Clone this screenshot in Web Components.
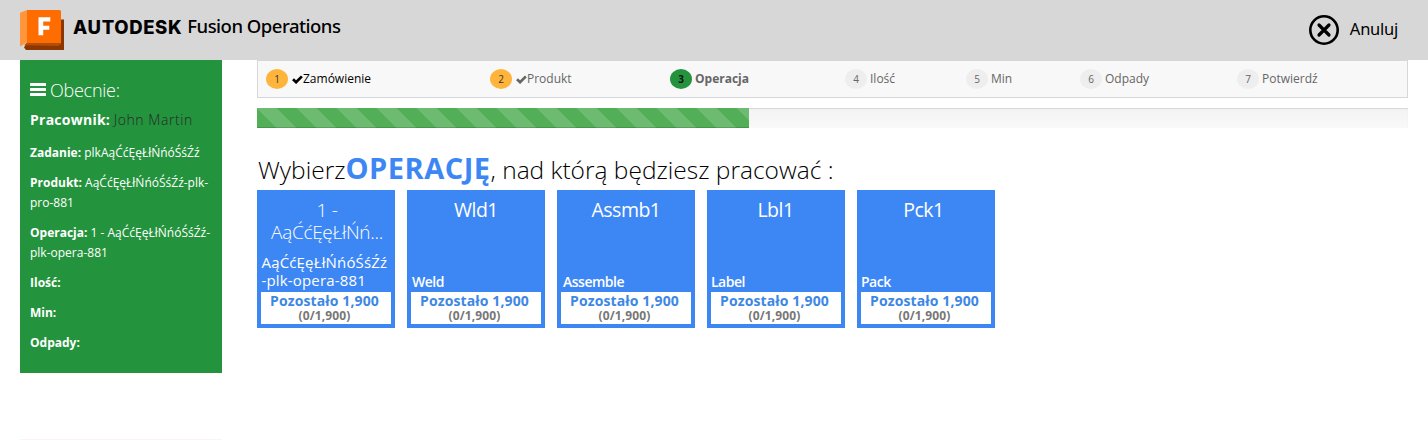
<!DOCTYPE html>
<html lang="pl">
<head>
<meta charset="utf-8">
<title>Fusion Operations</title>
<style>
html,body{margin:0;height:440px;overflow:hidden;background:#fff}
body{font-family:"Open Sans","Noto Sans",sans-serif;font-size:12px;color:#333}
</style>
</head>
<body>
<fo-app></fo-app>
<script>
const define = (name, html) => customElements.define(name, class extends HTMLElement {
  constructor() {
    super();
    const t = document.createElement('template');
    t.innerHTML = typeof html === 'function' ? html(this) : html;
    this.attachShadow({mode: 'open'}).append(t.content.cloneNode(true));
  }
});

define('fo-header', `
<style>
:host{display:flex;height:60px;background:#d7d7d7;align-items:center;box-sizing:border-box;padding:0 30px 0 20px}
.logo{width:44px;height:40px;display:block;margin-right:9px}
.brand{font:800 18.5px/24px Inter,sans-serif;color:#000;letter-spacing:.65px;margin-top:-6px}
.prod{font:500 18.5px/24px "Noto Sans",sans-serif;color:#000;margin:-8px 0 0 5px;letter-spacing:-.5px}
.cancel{margin-left:auto;display:flex;align-items:center;gap:11px;font:400 16.5px/24px "Noto Sans",sans-serif;letter-spacing:-.25px;color:#000}
.cancel svg{display:block}
.cancel slot{display:block;margin-top:-2px}
</style>
<svg class="logo" viewBox="0 0 44 40">
<path d="M41 9.500h3V40H6l-2-2.500 3-5h34z" fill="#8a3700"/>
<path d="M0 2.800L7 0v32.500L0 36.500z" fill="#ff963c"/>
<path d="M7 0h32.500q1.500 0 1.500 1.500V33H7z" fill="#ff6d00"/>
<path d="M4 35.300L7 33h34v1.200L38 36z" fill="#b34e0a"/>
<path d="M18.500 7.300H30.300v4.100h-7.100v4.300h6.100v4h-6.100V25.300h-4.700z" fill="#fff"/>
</svg>
<span class="brand">AUTODESK</span><span class="prod">Fusion Operations</span>
<div class="cancel"><svg width="30" height="30" viewBox="0 0 30 30" fill="none" stroke="#000"><circle cx="15" cy="15" r="13.700" stroke-width="2.600"/><path d="M10 10l10 10M20 10L10 20" stroke-width="3.200" stroke-linecap="round"/></svg><slot></slot></div>`);

define('fo-status-line', `
<style>
:host{display:block;font-size:12px;line-height:20px;margin-bottom:10px;color:#fff;white-space:nowrap}
b{font-weight:700}
</style><b><slot name="label"></slot></b> <slot></slot>`);

define('fo-sidebar', `
<style>
:host{display:block;width:202px;height:313px;box-sizing:border-box;background:#24933d;color:#fff;padding:20px 8px 0 10px}
h2{font-weight:300;font-size:18px;line-height:20px;margin:0 0 9px;display:flex;align-items:center;gap:4px;letter-spacing:-.25px}
.worker{font-size:14px;line-height:22px;margin-bottom:12px;white-space:nowrap}
.worker b{font-weight:700;letter-spacing:.25px}
.worker span{font-weight:300;color:#282828;letter-spacing:.55px}
</style>
<h2><svg width="16" height="14" viewBox="0 0 16 14" fill="#fff"><rect y="0" width="16" height="3" rx=".5"/><rect y="5" width="16" height="3" rx=".5"/><rect y="10" width="16" height="3" rx=".5"/></svg>Obecnie:</h2>
<div class="worker"><b>Pracownik:</b> <span>John Martin</span></div>
<slot></slot>`);

define('fo-step', el => `
<style>
:host{display:flex;align-items:center;flex:none;box-sizing:border-box;color:#666;font-size:12px;line-height:20px;white-space:nowrap}
:host([state=first]){color:#000}
:host([state=active]){font-weight:700}
i{font-style:normal;font-size:10px;line-height:20px;width:22px;height:20px;border-radius:50%;text-align:center;background:#eee;margin-right:3px;color:#666}
:host([state=first]) i,:host([state=done]) i{background:#ffb53c;color:#333;margin-right:4px}
:host([state=active]) i{background:#24933d;color:#111}
svg{display:none;margin-top:1px}
:host([state=first]) svg,:host([state=done]) svg{display:block}
</style>
<i>${el.getAttribute('n')}</i><svg width="11" height="9" viewBox="0 0 11 9"><path d="M1 4.200L4.100 7.200L9.900 1.400" fill="none" stroke="currentColor" stroke-width="2.700"/></svg><slot></slot>`);

define('fo-steps', `
<style>
:host{display:grid;grid-template-columns:224px 180px 175px 121px 114px 157px 1fr;box-sizing:border-box;height:38px;border:1px solid #d7d6d8;background:#f8f8f8;padding:0 0 0 8px;align-items:center}
</style><slot></slot>`);

define('fo-progress', `
<style>
:host{display:block;height:20px;background:linear-gradient(#f3f3f3,#f9f9f9);box-shadow:inset 0 1px 1px rgba(0,0,0,.12)}
div{height:20px;width:492px;background:linear-gradient(45deg,rgba(255,255,255,.15) 25%,transparent 25%,transparent 50%,rgba(255,255,255,.15) 50%,rgba(255,255,255,.15) 75%,transparent 75%) 0 0/40px 40px #53ae58;box-shadow:inset 0 -1px 0 rgba(0,0,0,.15)}
</style><div></div>`);

define('fo-card', `
<style>
:host{display:flex;flex-direction:column;width:138px;height:138px;box-sizing:border-box;background:#3d87f5;border:4px solid #3d87f5;color:#fff}
h3{margin:5px 0 0 var(--tx,0);text-align:center;font-weight:var(--tw,400);font-size:var(--ts,19.5px);line-height:22px;letter-spacing:var(--tls,-.5px)}
.name{margin:auto 0 var(--nb,1px) var(--nx,1px);line-height:18px;font-size:var(--ns,14px);font-weight:var(--nw,650);letter-spacing:var(--nls,-.5px);white-space:nowrap}
.left{background:#fff;height:32px;text-align:center;font-weight:700;line-height:18px;font-size:14px;letter-spacing:.13px;color:#3d87e5;padding-right:3px}
.left small{display:block;font-size:12px;line-height:12px;color:#777;font-weight:700}
</style>
<h3><slot name="title"></slot></h3>
<div class="name"><slot></slot></div>
<div class="left">Pozostało 1,900<small>(0/1,900)</small></div>`);

define('fo-app', `
<style>
:host{display:block}
.body{display:flex;padding:0 20px;gap:35px}
main{flex:1;min-width:0}
fo-progress{margin-top:10px}
h1{font-weight:300;font-size:24.5px;line-height:40px;height:40px;margin:21px 0 1px 1px;color:#000;white-space:nowrap;letter-spacing:0}
h1 b{font-weight:700;font-size:29px;line-height:38px;letter-spacing:.5px;color:#3d87f5}
.cards{display:flex;gap:12px}
.first{--tw:300;--nw:400;--ns:15px;--nls:.16px;--nb:3px;--ts:19px;--tls:-.3px;--tx:2px;--nx:.5px}
.as{--nx:2px}
.pk{--tx:-5px;--nx:0px}
.lb{--nx:0px;--tx:-1px}
hr{border:0;height:1px;width:202px;background:#faf4fa;margin:66px 0 0 20px}
</style>
<fo-header><span class="c">Anuluj</span></fo-header>
<div class="body">
<fo-sidebar>
<fo-status-line><span slot="label">Zadanie:</span>plkAąĆćĘęŁłŃńóŚśŹź</fo-status-line>
<fo-status-line><span slot="label">Produkt:</span>AąĆćĘęŁłŃńóŚśŹź-plk-<br>pro-881</fo-status-line>
<fo-status-line><span slot="label">Operacja:</span>1 - AąĆćĘęŁłŃńóŚśŹź-<br>plk-opera-881</fo-status-line>
<fo-status-line><span slot="label">Ilość:</span></fo-status-line>
<fo-status-line><span slot="label">Min:</span></fo-status-line>
<fo-status-line><span slot="label">Odpady:</span></fo-status-line>
</fo-sidebar>
<main>
<fo-steps>
<fo-step n="1" state="first">Zamówienie</fo-step>
<fo-step n="2" state="done">Produkt</fo-step>
<fo-step n="3" state="active">Operacja</fo-step>
<fo-step n="4">Ilość</fo-step>
<fo-step n="5">Min</fo-step>
<fo-step n="6">Odpady</fo-step>
<fo-step n="7">Potwierdź</fo-step>
</fo-steps>
<fo-progress></fo-progress>
<h1>Wybierz<b>OPERACJĘ</b>, nad którą będziesz pracować :</h1>
<div class="cards">
<fo-card class="first"><span slot="title">1 -<br>AąĆćĘęŁłŃń...</span>AąĆćĘęŁłŃńóŚśŹź<br>-plk-opera-881</fo-card>
<fo-card><span slot="title">Wld1</span>Weld</fo-card>
<fo-card class="as"><span slot="title">Assmb1</span>Assemble</fo-card>
<fo-card class="lb"><span slot="title">Lbl1</span>Label</fo-card>
<fo-card class="pk"><span slot="title">Pck1</span>Pack</fo-card>
</div>
</main>
</div>
<hr>`);
</script>
</body>
</html>
